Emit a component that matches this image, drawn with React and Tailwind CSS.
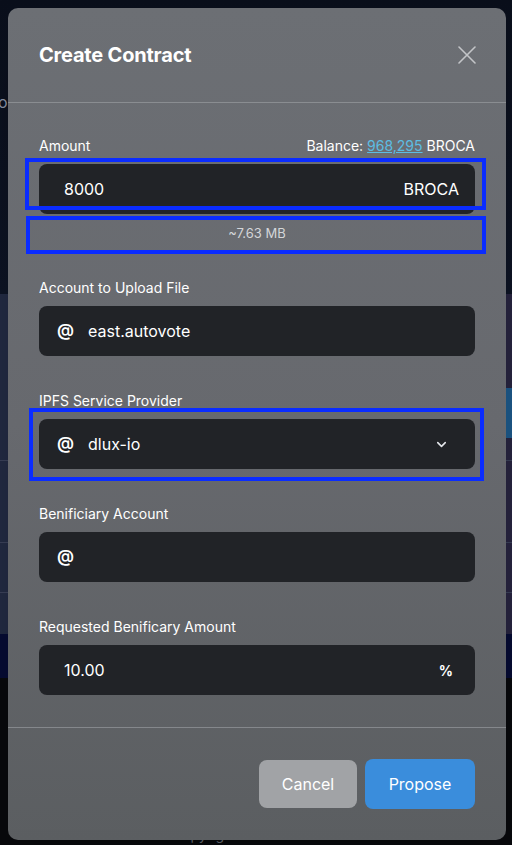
import React from "react";
import { ChevronDown } from "lucide-react";

function Label({ children, right }) {
  return (
    <div className="flex h-5 items-center justify-between text-[14px] leading-5 text-white">
      <span>{children}</span>
      {right}
    </div>
  );
}

function At() {
  return <span className="w-[31px] text-[17px] font-semibold text-white">@</span>;
}

export default function App() {
  return (
    <div
      className="relative h-[845px] w-[512px] overflow-hidden bg-[#0b111e]"
      style={{ fontFamily: "Inter, 'Noto Sans', sans-serif" }}
    >
      {/* background page */}
      <div className="flex h-full flex-col">
        <div className="h-[298px] bg-gradient-to-b from-[#0a0f1b] to-[#0d1424] pt-[90px]">
          <span className="ml-[-6px] text-[16px] text-[#8b93a5]">lo</span>
        </div>
        <div className="flex h-[347px] flex-col bg-gradient-to-r from-[#222a42] to-[#27243f]">
          <div className="flex h-[166px] items-end justify-end pb-[22px]">
            <div className="h-[50px] w-[20px] bg-[#1d5889]"></div>
          </div>
          <div className="h-[82px] border-t border-[#3a4058]"></div>
          <div className="h-[50px] border-t border-[#3a4058]"></div>
          <div className="flex-1 border-t border-[#3a4058]"></div>
        </div>
        <div className="h-[45px] bg-[#060b33]"></div>
        <div className="flex flex-1 justify-center bg-[#08090c] pt-[146px]">
          <span className="text-[14px] text-[#6b6f78]">Copyright © 2024 dlux.io</span>
        </div>
      </div>

      {/* modal */}
      <div className="absolute left-[8px] top-[8px] flex h-[832px] w-[498px] flex-col rounded-[10px] bg-gradient-to-b from-[#6c6f74] via-[#67696e] to-[#5b5e61] shadow-2xl">
        <div className="flex h-[95px] items-center justify-between border-b border-[#8a8d91] px-[31px]">
          <h1 className="text-[20px] font-bold leading-7 tracking-[-0.2px] text-white">Create Contract</h1>
          <svg width="18" height="18" viewBox="0 0 18 18" className="mr-[-1px]">
            <path d="M1 1 L17 17 M17 1 L1 17" stroke="#c3c5c8" strokeWidth="1.6" strokeLinecap="round" />
          </svg>
        </div>

        <div className="flex flex-col px-[31px] pb-[32px] pt-[33px]">
          <Label
            right={
              <span>
                Balance: <span className="text-[#5cbde3] underline">968,295</span> BROCA
              </span>
            }
          >
            Amount
          </Label>
          <div className="mt-2 flex h-[50px] items-center justify-between rounded-[8px] bg-[#212327] pl-[25px] pr-[16px] text-[16px] text-white">
            <span>8000</span>
            <span>BROCA</span>
          </div>
          <div className="mt-[11px] text-center text-[13px] leading-4 text-[#d4d6d9]">~7.63 MB</div>

          <div className="mt-[37px]">
            <Label>Account to Upload File</Label>
          </div>
          <div className="mt-2 flex h-[50px] items-center rounded-[8px] bg-[#212327] pl-[18px] text-[16px] text-white">
            <At />
            <span>east.autovote</span>
          </div>

          <div className="mt-[35px]">
            <Label>IPFS Service Provider</Label>
          </div>
          <div className="mt-2 flex h-[50px] items-center rounded-[8px] bg-[#212327] pl-[18px] pr-[26px] text-[16px] text-white">
            <At />
            <span className="flex-1">dlux-io</span>
            <ChevronDown size={15} strokeWidth={2.5} color="#e5e7eb" />
          </div>

          <div className="mt-[35px]">
            <Label>Benificiary Account</Label>
          </div>
          <div className="mt-2 flex h-[50px] items-center rounded-[8px] bg-[#212327] pl-[18px] text-[16px] text-white">
            <At />
          </div>

          <div className="mt-[35px]">
            <Label>Requested Benificary Amount</Label>
          </div>
          <div className="mt-2 flex h-[50px] items-center justify-between rounded-[8px] bg-[#212327] pl-[25px] pr-[22px] text-[16px] text-white">
            <span>10.00</span>
            <span className="text-[14px] font-bold">%</span>
          </div>
        </div>

        <div className="flex flex-1 items-center justify-end gap-2 border-t border-[#85888c] px-[31px]">
          <button className="h-[48px] w-[98px] rounded-[8px] bg-[#a1a3a6] text-[16px] text-white">Cancel</button>
          <button className="h-[50px] w-[110px] rounded-[8px] bg-[#3a8ddc] text-[16px] text-white">Propose</button>
        </div>
      </div>

      {/* highlight overlays */}
      <div className="absolute left-[25px] top-[158px] h-[52px] w-[461px] border-4 border-[#0a2cff]"></div>
      <div className="absolute left-[26px] top-[216px] h-[38px] w-[460px] border-4 border-[#0a2cff]"></div>
      <div className="absolute left-[29px] top-[408px] h-[73px] w-[455px] border-4 border-[#0a2cff]"></div>
    </div>
  );
}
